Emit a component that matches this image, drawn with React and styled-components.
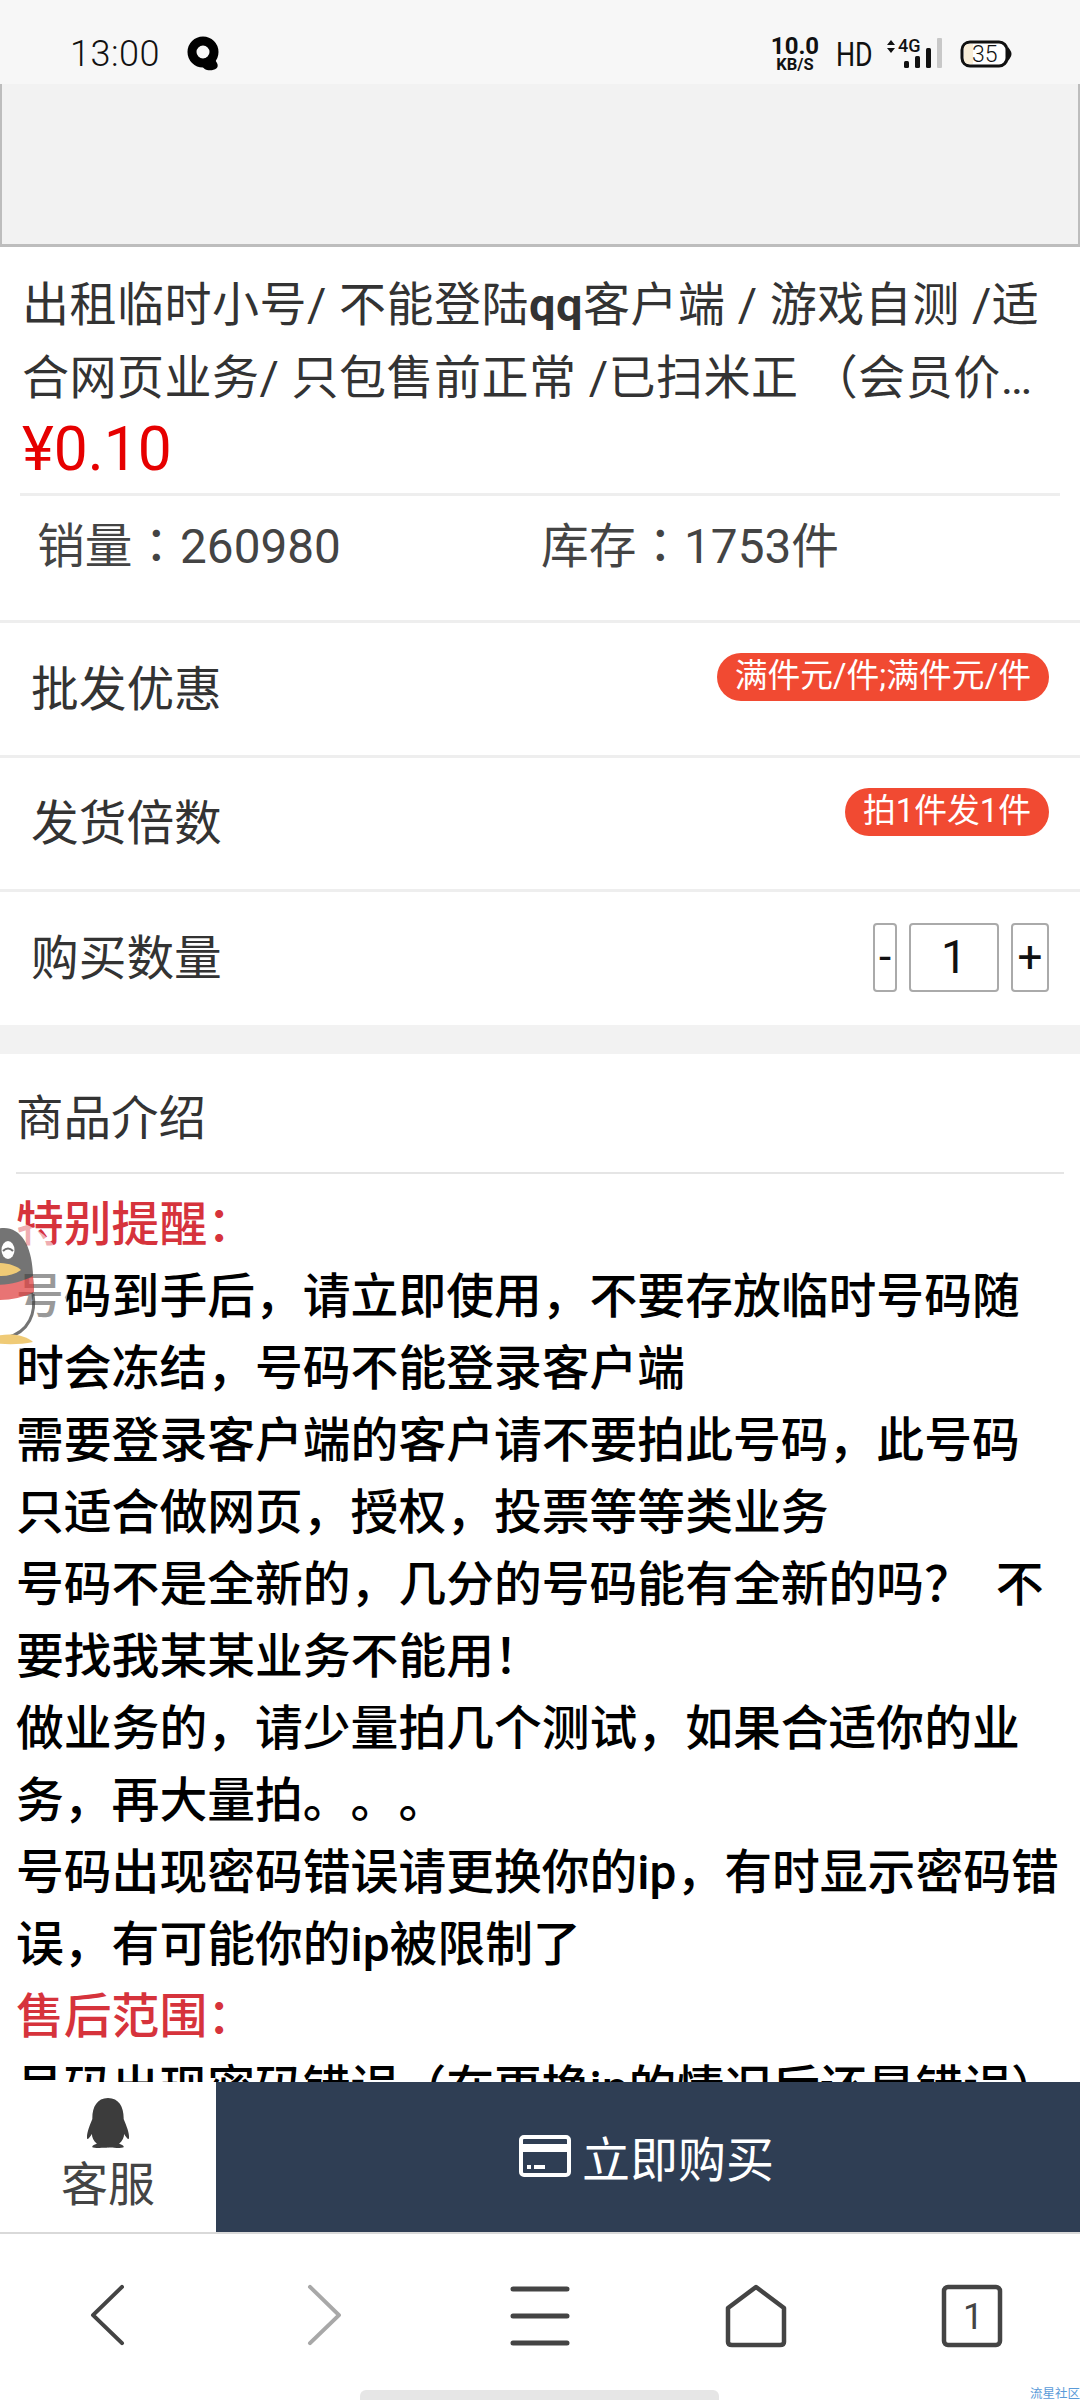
import React from "react";
import styled, { createGlobalStyle } from "styled-components";
import { FaQq } from "react-icons/fa";

const Global = createGlobalStyle`
  html, body { margin: 0; padding: 0; background: #fff; }
  * { box-sizing: border-box; }
  body { font-family: "Roboto", "Noto Sans CJK SC", sans-serif; text-spacing-trim: space-all; }
`;

const Page = styled.div`
  position: relative;
  width: 1080px;
  height: 2400px;
  display: flex;
  flex-direction: column;
  overflow: hidden;
  background: #fff;
`;

const StatusBar = styled.div`
  height: 84px;
  flex: none;
  background: #f7f7f7;
  display: flex;
  align-items: center;
  padding: 24px 68px 0 70px;
`;
const Clock = styled.span`
  font-size: 36px;
  font-weight: 300;
  color: #111;
  letter-spacing: 0.5px;
`;
const StatusLeftIcon = styled.svg`
  width: 34px;
  height: 36px;
  margin-left: 27px;
`;
const StatusRight = styled.div`
  margin-left: auto;
  display: flex;
  align-items: center;
`;
const Speed = styled.div`
  display: flex;
  flex-direction: column;
  align-items: center;
  color: #111;
  font-weight: 700;
  line-height: 1;
  width: 50px;
  margin-right: 16px;
`;
const SpeedValue = styled.span`
  font-size: 24px;
  height: 22px;
`;
const SpeedUnit = styled.span`
  font-size: 16.5px;
  margin-top: 1px;
`;
const Hd = styled.span`
  display: inline-block;
  width: 35px;
  margin-right: 14px;
  font-size: 33.5px;
  font-weight: 400;
  color: #111;
  transform: scaleX(0.8);
  transform-origin: left center;
  white-space: nowrap;
`;
const NetIcon = styled.svg`
  width: 60px;
  height: 34px;
`;
const NetLabel = styled.text`
  font-family: "Roboto", sans-serif;
  font-size: 18px;
  font-weight: 500;
  fill: #111;
`;
const Battery = styled.svg`
  width: 52px;
  height: 28px;
  margin-left: 15px;
`;
const BatteryLabel = styled.text`
  font-family: "Roboto", sans-serif;
  font-size: 23px;
  font-weight: 300;
  fill: #111;
`;

const Main = styled.main`
  flex: 1;
  min-height: 0;
  overflow: hidden;
`;
const Banner = styled.div`
  height: 163px;
  background: #f2f2f2;
  border: 2px solid #bdbdbd;
  border-top: 0;
  border-bottom-width: 3px;
`;
const Summary = styled.section`
  padding: 21px 22px 0;
`;
const Title = styled.h1`
  margin: 0;
  font-size: 47px;
  line-height: 73px;
  font-weight: 400;
  color: #333;
  display: -webkit-box;
  -webkit-line-clamp: 2;
  -webkit-box-orient: vertical;
  overflow: hidden;
  letter-spacing: 0.5px;
`;
const Price = styled.div`
  font-size: 60.5px;
  line-height: 72px;
  color: #e60000;
`;
const Rule = styled.div`
  height: 3px;
  background: #eee;
  margin: 7px -2px 0;
`;
const Stats = styled.div`
  display: grid;
  grid-template-columns: 504px 1fr;
  padding: 21px 0 0 15px;
  height: 124px;
`;
const Stat = styled.span`
  font-family: "Roboto", "Noto Sans CJK TC", sans-serif;
  font-size: 47.7px;
  line-height: 60px;
  color: #444;
  font-weight: 400;
`;
const Row = styled.div`
  height: 134.5px;
  border-top: 3px solid #eee;
  padding: 0 31px;
  display: flex;
  justify-content: space-between;
  align-items: center;
`;
const RowLabel = styled.span`
  font-size: 47.7px;
  color: #333;
  margin-top: -7px;
`;
const Pill = styled.span`
  align-self: flex-start;
  margin-top: 30px;
  height: 48px;
  line-height: 46px;
  padding: 0 18px;
  border-radius: 24px;
  background: #f14a32;
  color: #fff;
  font-size: 32.8px;
  white-space: nowrap;
`;
const Stepper = styled.div`
  display: flex;
  align-items: center;
  gap: 12px;
  margin-top: -1px;
`;
const StepButton = styled.div`
  width: ${(p) => p.$w}px;
  height: 69px;
  border: 2px solid #aaa;
  border-radius: 4px;
  display: flex;
  align-items: center;
  justify-content: center;
  font-size: ${(p) => p.$size}px;
  color: #111;
  background: #fff;
`;
const Band = styled.div`
  height: 29px;
  margin-top: 1px;
  background: #f2f2f2;
`;
const Intro = styled.section`
  padding: 0 16px;
`;
const IntroHeading = styled.h2`
  margin: 0;
  height: 120px;
  padding-top: 36px;
  font-size: 47.5px;
  line-height: 58px;
  font-weight: 400;
  color: #333;
  border-bottom: 2px solid #e5e5e5;
`;
const IntroBody = styled.div`
  padding-top: 15px;
  font-size: 47.8px;
  line-height: 72px;
  color: #000;
  font-weight: 500;
`;
const Alert = styled.div`
  color: #d6333c;
`;

const BuyBar = styled.div`
  height: 150px;
  flex: none;
  display: flex;
  background: #fff;
`;
const Service = styled.div`
  width: 216px;
  display: flex;
  flex-direction: column;
  align-items: center;
  color: #444;
  font-size: 47px;
  line-height: 56px;
  padding-top: 16px;
`;
const ServiceLabel = styled.span`
  margin-top: 9px;
`;
const BuyButton = styled.div`
  flex: 1;
  background: #2f3e54;
  color: #fff;
  display: flex;
  align-items: center;
  justify-content: center;
  gap: 11px;
  font-size: 48px;
  padding-right: 3px;
  padding-bottom: 2px;
`;
const CardIcon = styled.svg`
  width: 52px;
  height: 42px;
`;

const NavBar = styled.nav`
  height: 168px;
  flex: none;
  border-top: 2px solid #d9d9d9;
  display: grid;
  grid-template-columns: repeat(5, 1fr);
  justify-items: center;
  padding: 50px 0 0 0;
  background: #fff;
`;
const NavIcon = styled.svg`
  width: 62px;
  height: 64px;
  fill: none;
  stroke: ${(p) => p.$stroke || "#444"};
  stroke-width: 4;
  stroke-linecap: round;
  stroke-linejoin: round;
`;
const TabNumber = styled.text`
  font-family: "Roboto", sans-serif;
  font-size: 36px;
  fill: #444;
  stroke: none;
`;
const HomeIndicator = styled.div`
  position: absolute;
  left: 360px;
  bottom: 0;
  width: 359px;
  height: 10px;
  border-radius: 6px 6px 0 0;
  background: #e6e6e6;
`;
const Watermark = styled.span`
  position: absolute;
  right: 0;
  bottom: -1px;
  font-size: 12.5px;
  line-height: 14px;
  color: #5a9bd8;
`;
const Floating = styled.svg`
  position: absolute;
  left: 0;
  top: 1220px;
  width: 70px;
  height: 132px;
`;

const App = () => (
  <Page>
    <Global />
    <StatusBar>
      <Clock>13:00</Clock>
      <StatusLeftIcon viewBox="0 0 34 36">
        <circle cx="16" cy="16" r="11" fill="none" stroke="#000" strokeWidth="9" />
        <path d="M15 25 C18 20 27 20 30 27 C33 33 26 35 20 34 C16 33 14 29 15 25Z" fill="#000" />
      </StatusLeftIcon>
      <StatusRight>
        <Speed>
          <SpeedValue>10.0</SpeedValue>
          <SpeedUnit>KB/S</SpeedUnit>
        </Speed>
        <Hd>HD</Hd>
        <NetIcon viewBox="0 0 60 34">
          <path d="M2 8 L6 3 L10 8Z M2 11 L6 16 L10 11Z" fill="#111" />
          <NetLabel x="13" y="15">4G</NetLabel>
          <rect x="19" y="24" width="5" height="7" rx="1.5" fill="#111" />
          <rect x="30" y="19" width="5" height="12" rx="1.5" fill="#111" />
          <rect x="41" y="11" width="5" height="20" rx="1.5" fill="#111" />
          <rect x="52" y="1" width="5" height="30" rx="1" fill="#c8c8c8" />
        </NetIcon>
        <Battery viewBox="0 0 52 28">
          <rect x="2" y="2" width="45" height="24" rx="8" fill="#fff" stroke="#111" strokeWidth="3" />
          <path d="M9 4 H13 V24 H9 Q4 24 4 19 V9 Q4 4 9 4Z" fill="#f8edd8" />
          <path d="M49 10 Q52 14 49 18Z" fill="#111" stroke="#111" strokeWidth="2" />
          <BatteryLabel x="12" y="22">35</BatteryLabel>
        </Battery>
      </StatusRight>
    </StatusBar>

    <Main>
      <Banner />
      <Summary>
        <Title>出租临时小号/ 不能登陆<b>qq</b>客户端 / 游戏自测 /适合网页业务/ 只包售前正常 /已扫米正 （会员价格更低，详情请咨询客服）</Title>
        <Price>¥0.10</Price>
        <Rule />
        <Stats>
          <Stat>销量：260980</Stat>
          <Stat>库存：1753件</Stat>
        </Stats>
      </Summary>
      <Row>
        <RowLabel>批发优惠</RowLabel>
        <Pill>满件元/件;满件元/件</Pill>
      </Row>
      <Row>
        <RowLabel>发货倍数</RowLabel>
        <Pill>拍1件发1件</Pill>
      </Row>
      <Row>
        <RowLabel>购买数量</RowLabel>
        <Stepper>
          <StepButton $w={24} $size={44}>-</StepButton>
          <StepButton $w={90} $size={46}>1</StepButton>
          <StepButton $w={38} $size={44}>+</StepButton>
        </Stepper>
      </Row>
      <Band />
      <Intro>
        <IntroHeading>商品介绍</IntroHeading>
        <IntroBody>
          <Alert>特别提醒：</Alert>
          <div>号码到手后，请立即使用，不要存放临时号码随时会冻结，号码不能登录客户端</div>
          <div>需要登录客户端的客户请不要拍此号码，此号码只适合做网页，授权，投票等等类业务</div>
          <div>号码不是全新的，几分的号码能有全新的吗？&nbsp; 不要找我某某业务不能用！</div>
          <div>做业务的，请少量拍几个测试，如果合适你的业务，再大量拍。。。</div>
          <div>号码出现密码错误请更换你的ip，有时显示密码错误，有可能你的ip被限制了</div>
          <Alert>售后范围：</Alert>
          <div>号码出现密码错误（在更换ip的情况后还是错误）</div>
        </IntroBody>
      </Intro>
    </Main>

    <BuyBar>
      <Service>
        <FaQq size={50} color="#3c3c3c" />
        <ServiceLabel>客服</ServiceLabel>
      </Service>
      <BuyButton>
        <CardIcon viewBox="0 0 52 42">
          <rect x="2" y="2" width="48" height="38" rx="3" fill="none" stroke="#fff" strokeWidth="4" />
          <rect x="2" y="9" width="48" height="8" fill="#fff" />
          <rect x="8" y="30" width="4" height="4" fill="#fff" />
          <rect x="15" y="30" width="11" height="4" fill="#fff" />
        </CardIcon>
        立即购买
      </BuyButton>
    </BuyBar>

    <NavBar>
      <NavIcon viewBox="0 0 62 64">
        <path d="M45 3 L16 32 L45 61" transform="scale(1 0.97)" />
      </NavIcon>
      <NavIcon viewBox="0 0 62 64" $stroke="#a8a8a8">
        <path d="M17 3 L46 32 L17 61" transform="scale(1 0.97)" />
      </NavIcon>
      <NavIcon viewBox="0 0 62 64">
        <path d="M4 5 H58 M4 32 H58 M4 59 H58" strokeWidth="5" />
      </NavIcon>
      <NavIcon viewBox="0 0 62 64">
        <path d="M31 3 L59 24 V58 Q59 61 55 61 H7 Q3 61 3 58 V24 Z" strokeWidth="4.5" />
      </NavIcon>
      <NavIcon viewBox="0 0 62 64">
        <rect x="3" y="3" width="56" height="58" rx="4" strokeWidth="4.5" />
        <TabNumber x="22" y="45">1</TabNumber>
      </NavIcon>
    </NavBar>

    <Floating viewBox="0 0 70 132">
      <circle cx="2" cy="66" r="66" fill="#fff" fillOpacity="0.6" />
      <g opacity="0.7">
        <path d="M-30 60 C-30 20 -10 8 4 8 C22 8 33 28 33 58 C34 66 34 70 33 74 L-30 78Z" fill="#3a3a3a" />
        <path d="M33 74 C36 92 30 112 6 118" fill="none" stroke="#3a3a3a" strokeWidth="3" />
        <ellipse cx="8" cy="30" rx="6.5" ry="9" fill="#fff" />
        <path d="M3 31 Q8 26 13 31" fill="none" stroke="#333" strokeWidth="2" />
        <path d="M-20 46 C0 40 14 44 21 50 C10 58 -8 58 -20 50Z" fill="#e9b53d" />
        <path d="M-30 60 C-10 68 14 66 33 56 L34 72 C14 82 -10 82 -30 76Z" fill="#df3a3a" />
        <path d="M-10 118 C6 112 24 114 33 122 C20 125 0 125 -10 122Z" fill="#e9b53d" />
      </g>
    </Floating>

    <HomeIndicator />
    <Watermark>流星社区</Watermark>
  </Page>
);

export default App;
